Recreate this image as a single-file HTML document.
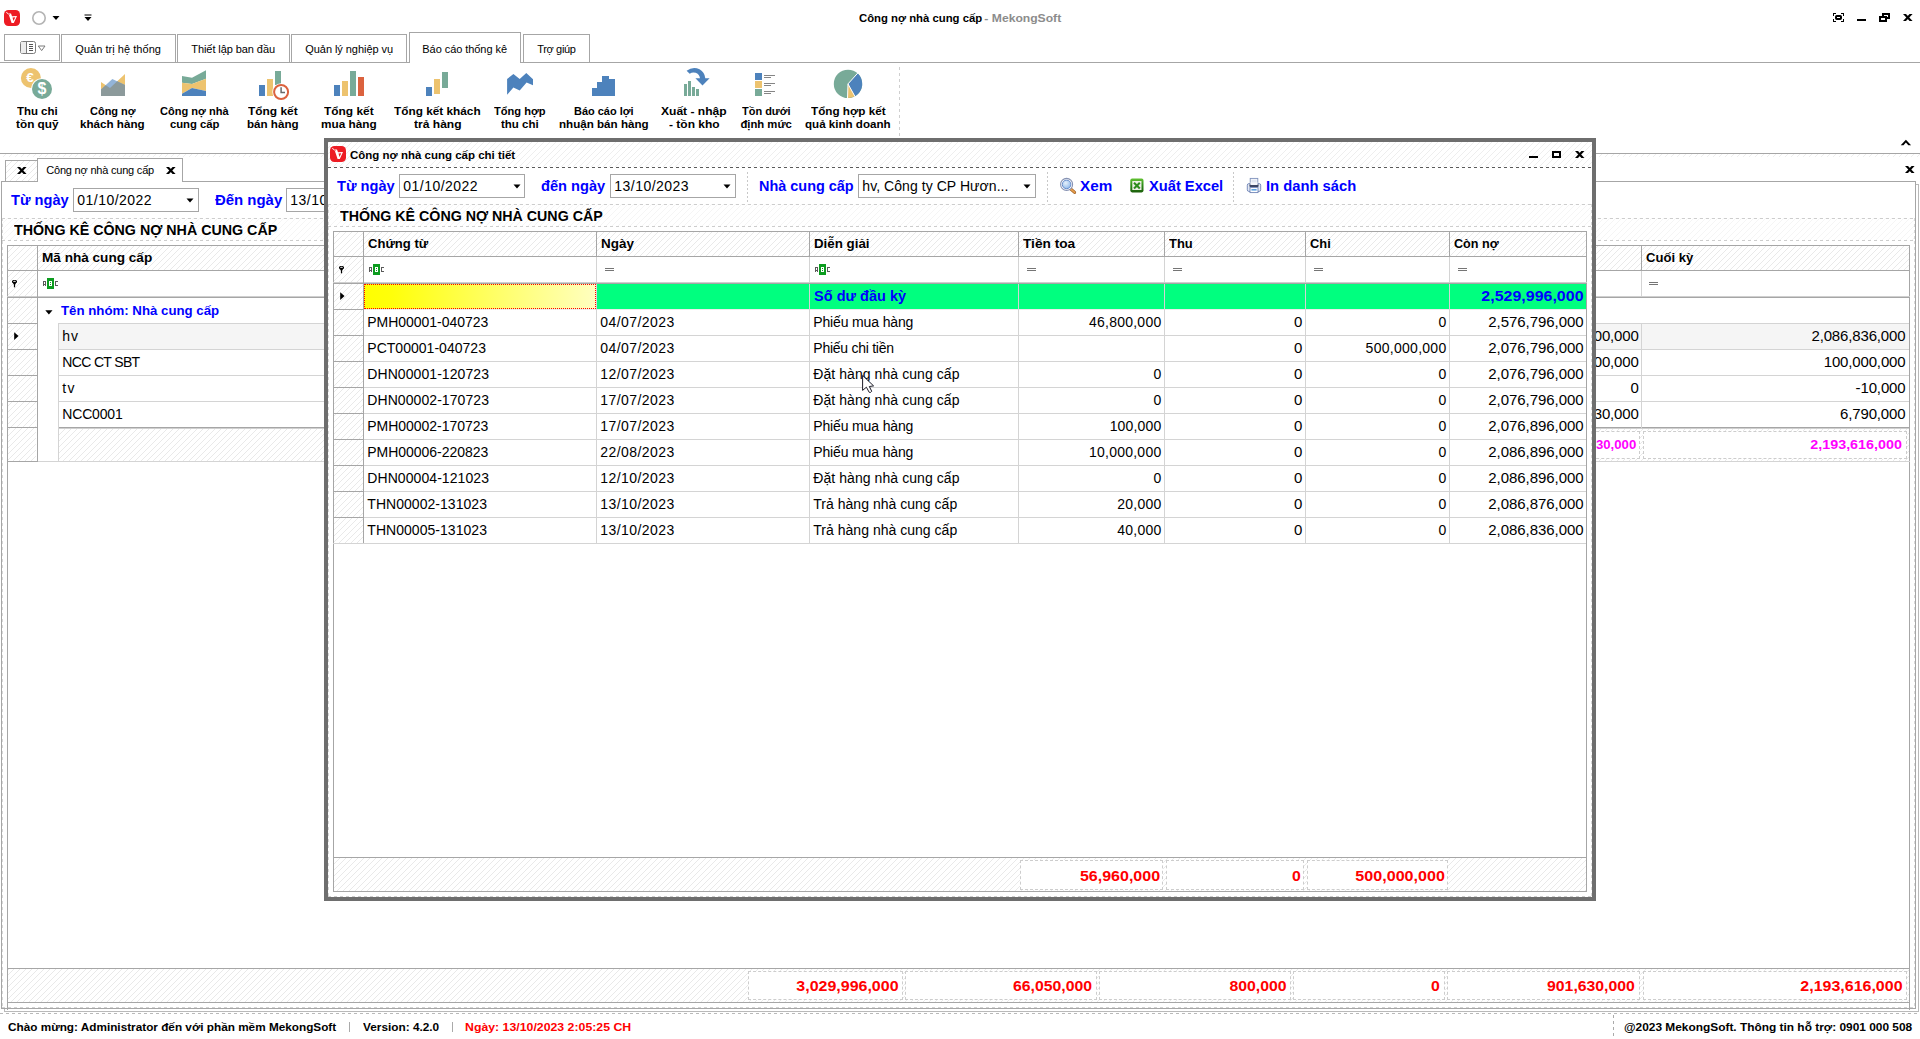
<!DOCTYPE html>
<html><head><meta charset="utf-8"><title>Công nợ nhà cung cấp - MekongSoft</title>
<style>
html,body{margin:0;padding:0;background:#fff;}
body{width:1920px;height:1039px;position:relative;overflow:hidden;font-family:"Liberation Sans",sans-serif;}
#r div,#r svg,#r span{position:absolute;box-sizing:border-box;}
#r span.t{white-space:pre;}
.h{background-image:repeating-linear-gradient(135deg, #eeeeee 0px, #eeeeee 0.7071px, rgba(255,255,255,0) 0.7071px, rgba(255,255,255,0) 4.2426px);background-color:#fff;}
.h1{background-image:repeating-linear-gradient(135deg, #f5f5f5 0px, #f5f5f5 0.7071px, rgba(255,255,255,0) 0.7071px, rgba(255,255,255,0) 4.2426px);background-color:#fff;}
.h2{background-image:repeating-linear-gradient(135deg, #e9e9e9 0px, #e9e9e9 0.7071px, rgba(255,255,255,0) 0.7071px, rgba(255,255,255,0) 4.2426px);background-color:#fff;}
</style></head>
<body><div id="r">
<svg style="left:4px;top:10px" width="16" height="16" viewBox="0 0 16 16"><rect x="0" y="0" width="16" height="16" rx="4.4" fill="#ed1c24"/><path fill-rule="evenodd" d="M4.4 3.5 L7 3.5 L8 6.3 L13 6 L9.8 13 L7.6 13 Z M8.5 7.4 L11.3 7.2 L9.5 11 Z M1.9 2.3 L2.6 2 L5.7 4.6 L5.1 5.3 Z" fill="#fff"/></svg>
<svg style="left:31px;top:10px" width="16" height="16" viewBox="0 0 16 16"><circle cx="8" cy="8" r="6.2" fill="#fff" stroke="#b4b4b4" stroke-width="1.6"/></svg>
<svg style="left:52px;top:15px" width="8" height="6" viewBox="0 0 8 6"><path d="M0.5 1 L7.5 1 L4 5 Z" fill="#000"/></svg>
<svg style="left:84px;top:14px" width="8" height="8" viewBox="0 0 8 8"><path d="M0.5 0.5 H7.5 V1.5 H0.5 Z M0.5 3 L7.5 3 L4 7 Z" fill="#000"/></svg>
<span class="t" id="t0" style="font-size:11.3px;line-height:18px;top:9.0px;color:#000;font-weight:700;transform:scaleX(1.0025);transform-origin:left center;left:859.00px;">Công nợ nhà cung cấp</span>
<span class="t" id="t1" style="font-size:11.3px;line-height:18px;top:9.0px;color:#8c8c8c;font-weight:700;transform:scaleX(1.0738);transform-origin:left center;left:981.00px;"> - MekongSoft</span>
<svg style="left:1833px;top:13px" width="11" height="9" viewBox="0 0 11 9"><g shape-rendering="crispEdges" fill="#000"><rect x="0" y="0" width="3" height="1"/><rect x="0" y="0" width="1" height="3"/><rect x="8" y="0" width="3" height="1"/><rect x="10" y="0" width="1" height="3"/><rect x="0" y="8" width="3" height="1"/><rect x="0" y="6" width="1" height="3"/><rect x="8" y="8" width="3" height="1"/><rect x="10" y="6" width="1" height="3"/></g><rect x="3" y="3" width="5" height="3" rx="0.8" fill="#fff" stroke="#000" stroke-width="2"/></svg>
<div style="left:1857px;top:19px;width:9px;height:2px;background:#000"></div>
<div style="left:1882px;top:13px;width:8px;height:6px;border:2px solid #000;background:#fff"></div>
<div style="left:1879px;top:16px;width:8px;height:6px;border:2px solid #000;background:#fff"></div>
<svg style="left:1902.5px;top:14px" width="10" height="7" viewBox="0 0 10 7"><path d="M0 0 H3 L9.6 7 H6.6 Z M6.6 0 H9.6 L3 7 H0 Z" fill="#000"/></svg>
<div style="left:0px;top:62px;width:1920px;height:1px;background:#a6a6a6"></div>
<div style="left:4px;top:34px;width:56px;height:27px;border:1px solid #a6a6a6;background:#fff"></div>
<svg style="left:20px;top:41px" width="26" height="13" viewBox="0 0 26 13"><rect x="0.5" y="0.5" width="15" height="12" rx="2" fill="#fff" stroke="#7a7a7a" stroke-width="1"/><rect x="1" y="1" width="5" height="11" fill="#ededed"/><rect x="6" y="1" width="1" height="11" fill="#7a7a7a"/><g fill="#555" shape-rendering="crispEdges"><rect x="9" y="3" width="4" height="1"/><rect x="9" y="5" width="4" height="1"/><rect x="9" y="7" width="4" height="1"/><rect x="9" y="9" width="4" height="1"/></g><path d="M18.3 5 L25 5 L21.65 9.6 Z" fill="#fff" stroke="#7a7a7a" stroke-width="1"/></svg>
<div style="left:61px;top:34px;width:115px;height:28px;border:1px solid #a6a6a6;border-bottom:none;background:#fff"></div>
<span class="t" id="t2" style="font-size:11px;line-height:17px;top:40.5px;color:#000;letter-spacing:0.040px;left:75.30px;">Quản trị hệ thống</span>
<div style="left:177px;top:34px;width:113px;height:28px;border:1px solid #a6a6a6;border-bottom:none;background:#fff"></div>
<span class="t" id="t3" style="font-size:11px;line-height:17px;top:40.5px;color:#000;letter-spacing:-0.077px;left:191.30px;">Thiết lập ban đầu</span>
<div style="left:291px;top:34px;width:116px;height:28px;border:1px solid #a6a6a6;border-bottom:none;background:#fff"></div>
<span class="t" id="t4" style="font-size:11px;line-height:17px;top:40.5px;color:#000;letter-spacing:-0.057px;left:305.30px;">Quản lý nghiệp vụ</span>
<div style="left:409px;top:32px;width:112px;height:30px;border:1px solid #a6a6a6;border-bottom:none;background:#fff"></div>
<div style="left:410px;top:62px;width:110px;height:1px;background:#fff"></div>
<span class="t" id="t5" style="font-size:11px;line-height:17px;top:40.5px;color:#000;letter-spacing:-0.058px;left:422.30px;">Báo cáo thống kê</span>
<div style="left:523px;top:34px;width:67px;height:28px;border:1px solid #a6a6a6;border-bottom:none;background:#fff"></div>
<span class="t" id="t6" style="font-size:11px;line-height:17px;top:40.5px;color:#000;letter-spacing:-0.356px;left:537.30px;">Trợ giúp</span>
<span class="t" id="t7" style="font-size:11.3px;line-height:18px;top:102.0px;color:#000;font-weight:700;transform:scaleX(1.0107);transform-origin:left center;left:16.90px;">Thu chi</span>
<span class="t" id="t8" style="font-size:11.3px;line-height:18px;top:115.0px;color:#000;font-weight:700;transform:scaleX(1.0442);transform-origin:left center;left:15.90px;">tồn quỹ</span>
<span class="t" id="t9" style="font-size:11.3px;line-height:18px;top:102.0px;color:#000;font-weight:700;transform:scaleX(0.9715);transform-origin:left center;left:89.90px;">Công nợ</span>
<span class="t" id="t10" style="font-size:11.3px;line-height:18px;top:115.0px;color:#000;font-weight:700;transform:scaleX(1.0290);transform-origin:left center;left:80.40px;">khách hàng</span>
<span class="t" id="t11" style="font-size:11.3px;line-height:18px;top:102.0px;color:#000;font-weight:700;transform:scaleX(0.9778);transform-origin:left center;left:160.40px;">Công nợ nhà</span>
<span class="t" id="t12" style="font-size:11.3px;line-height:18px;top:115.0px;color:#000;font-weight:700;left:169.90px;">cung cấp</span>
<span class="t" id="t13" style="font-size:11.3px;line-height:18px;top:102.0px;color:#000;font-weight:700;transform:scaleX(1.0536);transform-origin:left center;left:248.40px;">Tổng kết</span>
<span class="t" id="t14" style="font-size:11.3px;line-height:18px;top:115.0px;color:#000;font-weight:700;transform:scaleX(1.0275);transform-origin:left center;left:247.40px;">bán hàng</span>
<span class="t" id="t15" style="font-size:11.3px;line-height:18px;top:102.0px;color:#000;font-weight:700;transform:scaleX(1.0536);transform-origin:left center;left:324.40px;">Tổng kết</span>
<span class="t" id="t16" style="font-size:11.3px;line-height:18px;top:115.0px;color:#000;font-weight:700;transform:scaleX(1.0420);transform-origin:left center;left:321.40px;">mua hàng</span>
<span class="t" id="t17" style="font-size:11.3px;line-height:18px;top:102.0px;color:#000;font-weight:700;transform:scaleX(1.0451);transform-origin:left center;left:394.40px;">Tổng kết khách</span>
<span class="t" id="t18" style="font-size:11.3px;line-height:18px;top:115.0px;color:#000;font-weight:700;transform:scaleX(1.0678);transform-origin:left center;left:413.90px;">trả hàng</span>
<span class="t" id="t19" style="font-size:11.3px;line-height:18px;top:102.0px;color:#000;font-weight:700;transform:scaleX(0.9814);transform-origin:left center;left:494.40px;">Tổng hợp</span>
<span class="t" id="t20" style="font-size:11.3px;line-height:18px;top:115.0px;color:#000;font-weight:700;transform:scaleX(1.0154);transform-origin:left center;left:501.40px;">thu chi</span>
<span class="t" id="t21" style="font-size:11.3px;line-height:18px;top:102.0px;color:#000;font-weight:700;transform:scaleX(0.9706);transform-origin:left center;left:574.40px;">Báo cáo lợi</span>
<span class="t" id="t22" style="font-size:11.3px;line-height:18px;top:115.0px;color:#000;font-weight:700;transform:scaleX(1.0271);transform-origin:left center;left:559.40px;">nhuận bán hàng</span>
<span class="t" id="t23" style="font-size:11.3px;line-height:18px;top:102.0px;color:#000;font-weight:700;transform:scaleX(1.0664);transform-origin:left center;left:661.40px;">Xuất - nhập</span>
<span class="t" id="t24" style="font-size:11.3px;line-height:18px;top:115.0px;color:#000;font-weight:700;transform:scaleX(1.0611);transform-origin:left center;left:668.90px;">- tồn kho</span>
<span class="t" id="t25" style="font-size:11.3px;line-height:18px;top:102.0px;color:#000;font-weight:700;transform:scaleX(0.9702);transform-origin:left center;left:741.90px;">Tồn dưới</span>
<span class="t" id="t26" style="font-size:11.3px;line-height:18px;top:115.0px;color:#000;font-weight:700;left:740.40px;">định mức</span>
<span class="t" id="t27" style="font-size:11.3px;line-height:18px;top:102.0px;color:#000;font-weight:700;transform:scaleX(1.0354);transform-origin:left center;left:810.90px;">Tổng hợp kết</span>
<span class="t" id="t28" style="font-size:11.3px;line-height:18px;top:115.0px;color:#000;font-weight:700;transform:scaleX(1.0253);transform-origin:left center;left:805.40px;">quả kinh doanh</span>
<div style="left:899px;top:67px;width:1px;height:69px;background:repeating-linear-gradient(180deg,#cfcfcf 0,#cfcfcf 3px,transparent 3px,transparent 6px)"></div>
<svg style="left:1899px;top:138px" width="14" height="9" viewBox="1899 138 14 9"><path d="M1900.7 145.2 L1905.9 139.8 L1911.1 145.2 L1908.3 145.2 L1905.9 142.6 L1903.5 145.2 Z" fill="#000"/></svg>
<svg style="left:0px;top:64px" width="900" height="40" viewBox="0 64 900 40"><circle cx="30.9" cy="78" r="10" fill="#edc36f"/><text x="30" y="81.9" font-size="13.5" font-weight="700" text-anchor="middle" fill="#fff" font-family="Liberation Sans">€</text><circle cx="42" cy="89" r="10.8" fill="#fff"/><circle cx="42" cy="89" r="10" fill="#78aa98"/><text x="42" y="94.4" font-size="16" font-weight="700" text-anchor="middle" fill="#fff" font-family="Liberation Sans">$</text><path d="M101 82 L110 88 L125 74 V96 H101 Z" fill="#edc36f"/><path d="M101 89.6 L112.3 79 L125 85 V96 H101 Z" fill="#93b4d8"/><path d="M101 89.6 L105.7 85.2 L110 88 L117.2 81.3 L125 85 V96 H101 Z" fill="#8c9a9b"/><path d="M182 75.9 L192 77.8 L206 70.2 V78.7 L192 84 L182 82.8 Z" fill="#78aa98"/><path d="M182 82.8 L192 84 L206 78.7 V91 L192 88 L182 93.7 Z" fill="#edc36f"/><path d="M182 93.7 L192 88 L206 91 V96 H182 Z" fill="#4d82bc"/><rect x="259" y="85" width="6" height="11" fill="#4d82bc"/><rect x="267" y="79" width="6" height="17" fill="#edc36f"/><rect x="275" y="71" width="6" height="14" fill="#78aa98"/><circle cx="281.1" cy="92" r="8.8" fill="#fff"/><circle cx="281.1" cy="92" r="7" fill="#fff" stroke="#db623e" stroke-width="2"/><path d="M281.1 87.2 V92.6 H285" fill="none" stroke="#6a6a6a" stroke-width="1.5"/><rect x="334" y="85" width="6" height="11" fill="#4d82bc"/><rect x="342" y="81" width="6" height="15" fill="#edc36f"/><rect x="350" y="71" width="6" height="25" fill="#78aa98"/><rect x="358" y="77" width="6" height="19" fill="#db623e"/><rect x="426" y="87" width="6" height="9" fill="#4d82bc"/><rect x="434" y="79" width="6" height="15" fill="#edc36f"/><rect x="442" y="72" width="6" height="16" fill="#78aa98"/><path d="M507.1 79 L513.4 74 L519.7 79 L526.3 73 L533 79.3 V85.3 L526.6 82.6 L519.7 90.6 L513.4 87.5 L507.1 94.8 Z" fill="#4d82bc"/><path d="M592 96 V88 H597 V82 H602 V76 H609 V79 H615 V96 Z" fill="#4d82bc"/><rect x="684" y="84" width="3" height="12" fill="#78aa98"/><rect x="688" y="81" width="3" height="15" fill="#78aa98"/><rect x="692" y="87" width="3" height="9" fill="#78aa98"/><rect x="696" y="89" width="3" height="7" fill="#78aa98"/><path d="M686.6 70.8 Q693 66 699.5 69.3 Q704.8 72.5 705.3 78.2 L709.6 78.2 L702.5 85.5 L695.4 78.2 L700 78.2 Q699.3 74.2 695.6 72.8 Q692.3 71.9 689.7 73.7 Z" fill="#4d82bc"/><rect x="755" y="73" width="7" height="7" fill="#4d82bc"/><rect x="755" y="81" width="7" height="7" fill="#edc36f"/><rect x="755" y="89" width="7" height="7" fill="#78aa98"/><path d="M764 75.5 H775 M764 77.5 H771 M764 83.5 H775 M764 85.5 H771 M764 91.5 H775 M764 93.5 H771" stroke="#858585" stroke-width="1"/><circle cx="848" cy="83.9" r="14.2" fill="#78aa98"/><path d="M848 83.9 L857.50 73.35 A14.2 14.2 0 0 1 854.88 96.32 Z" fill="#4d82bc"/><path d="M848 83.9 L854.88 96.32 A14.2 14.2 0 0 1 847.50 98.09 Z" fill="#edc36f"/><path d="M858.04 72.75 L848 83.9 L855.27 97.02 M848 83.9 L847.48 98.89" stroke="#fff" stroke-width="1" fill="none"/></svg>
<div style="left:0px;top:153px;width:1920px;height:1px;background:#a6a6a6"></div>
<div class="h" style="left:0;top:154px;width:1920px;height:3px"></div>
<div style="left:0px;top:158px;width:1920px;height:24px;background:#fff"></div>
<div class="h2" style="left:5px;top:160px;width:33px;height:22px;border:1px solid #a6a6a6"></div>
<svg style="left:16.8px;top:167px" width="10" height="7" viewBox="0 0 10 7"><path d="M0 0 H3 L9.6 7 H6.6 Z M6.6 0 H9.6 L3 7 H0 Z" fill="#000"/></svg>
<div style="left:1px;top:181px;width:1915px;height:828px;border:1px solid #a6a6a6;background:#fff"></div>
<div style="left:1918px;top:184px;width:1px;height:828px;background:#b9b9b9"></div>
<div style="left:1916px;top:184px;width:3px;height:1px;background:#b9b9b9"></div>
<div style="left:4px;top:1011px;width:1915px;height:1px;background:#b9b9b9"></div>
<div style="left:4px;top:1009px;width:1px;height:3px;background:#b9b9b9"></div>
<div style="left:2px;top:1007px;width:1913px;height:1px;background:repeating-linear-gradient(90deg,#d4d4d4 0,#d4d4d4 3px,transparent 3px,transparent 6px)"></div>
<div style="left:2px;top:241px;width:1px;height:766px;background:repeating-linear-gradient(180deg,#d8d8d8 0,#d8d8d8 3px,transparent 3px,transparent 6px)"></div>
<div style="left:1914px;top:241px;width:1px;height:766px;background:repeating-linear-gradient(180deg,#d8d8d8 0,#d8d8d8 3px,transparent 3px,transparent 6px)"></div>
<div style="left:37px;top:158px;width:146px;height:24px;border:1px solid #a6a6a6;border-bottom:none;background:#fff"></div>
<span class="t" id="t29" style="font-size:11px;line-height:17px;top:161.5px;color:#000;letter-spacing:-0.205px;left:46.30px;">Công nợ nhà cung cấp</span>
<svg style="left:165.7px;top:167px" width="10" height="7" viewBox="0 0 10 7"><path d="M0 0 H3 L9.6 7 H6.6 Z M6.6 0 H9.6 L3 7 H0 Z" fill="#000"/></svg>
<svg style="left:1904.7px;top:166px" width="10" height="7" viewBox="0 0 10 7"><path d="M0 0 H3 L9.6 7 H6.6 Z M6.6 0 H9.6 L3 7 H0 Z" fill="#000"/></svg>
<span class="t" id="t30" style="font-size:14px;line-height:22px;top:189.0px;color:#0000ff;font-weight:700;transform:scaleX(1.0440);transform-origin:left center;left:11.00px;">Từ ngày</span>
<div style="left:73px;top:188px;width:126px;height:24px;border:1px solid #a6a6a6;background:#fff"></div>
<span class="t" id="t31" style="font-size:14px;line-height:22px;top:189.0px;color:#000;letter-spacing:0.462px;left:77.30px;">01/10/2022</span>
<svg style="left:186.2px;top:197.5px" width="8" height="5" viewBox="0 0 8 5"><path d="M0.5 0.5 L7.5 0.5 L4 4.5 Z" fill="#000"/></svg>
<span class="t" id="t32" style="font-size:14px;line-height:22px;top:189.0px;color:#0000ff;font-weight:700;transform:scaleX(1.0664);transform-origin:left center;left:215.00px;">Đến ngày</span>
<div style="left:286px;top:188px;width:126px;height:24px;border:1px solid #a6a6a6;background:#fff"></div>
<span class="t" id="t33" style="font-size:14px;line-height:22px;top:189.0px;color:#000;letter-spacing:0.462px;left:290.30px;">13/10/2023</span>
<div class="h1" style="left:2px;top:218px;width:1913px;height:23px"></div>
<div style="left:2px;top:218px;width:1913px;height:1px;background:repeating-linear-gradient(90deg,#cdcdcd 0,#cdcdcd 3px,transparent 3px,transparent 6px)"></div>
<div style="left:2px;top:240px;width:1913px;height:1px;background:repeating-linear-gradient(90deg,#cdcdcd 0,#cdcdcd 3px,transparent 3px,transparent 6px)"></div>
<div style="left:2px;top:218px;width:1px;height:23px;background:repeating-linear-gradient(180deg,#d8d8d8 0,#d8d8d8 3px,transparent 3px,transparent 6px)"></div>
<div style="left:1914px;top:218px;width:1px;height:23px;background:repeating-linear-gradient(180deg,#d8d8d8 0,#d8d8d8 3px,transparent 3px,transparent 6px)"></div>
<span class="t" id="t34" style="font-size:14px;line-height:22px;top:219.0px;color:#000;font-weight:700;transform:scaleX(1.0181);transform-origin:left center;left:14.00px;">THỐNG KÊ CÔNG NỢ NHÀ CUNG CẤP</span>
<div class="h2" style="left:7px;top:245px;width:1903px;height:26px;border:1px solid #a6a6a6"></div>
<div style="left:37px;top:245px;width:1px;height:26px;background:#a6a6a6"></div>
<div style="left:1641px;top:245px;width:1px;height:26px;background:#a6a6a6"></div>
<span class="t" id="t35" style="font-size:12.5px;line-height:20px;top:248.0px;color:#000;font-weight:700;transform:scaleX(1.0867);transform-origin:left center;left:42.00px;">Mã nhà cung cấp</span>
<span class="t" id="t36" style="font-size:12.5px;line-height:20px;top:248.0px;color:#000;font-weight:700;transform:scaleX(1.0453);transform-origin:left center;left:1646.00px;">Cuối kỳ</span>
<div style="left:7px;top:270px;width:1903px;height:28px;border:1px solid #a6a6a6;border-bottom:none;background:#fff"></div>
<div style="left:7px;top:296px;width:1903px;height:1px;background:#cfcfcf"></div>
<div style="left:7px;top:297px;width:1903px;height:1px;background:#a6a6a6"></div>
<div class="h2" style="left:8px;top:271px;width:28px;height:25px"></div>
<div style="left:37px;top:270px;width:1px;height:27px;background:#a6a6a6"></div>
<div style="left:1641px;top:271px;width:1px;height:25px;background:#d4d4d4"></div>
<svg style="left:12px;top:280px" width="5" height="8" viewBox="0 0 5 8"><ellipse cx="2.5" cy="1.7" rx="2.6" ry="1.8" fill="#000"/><ellipse cx="2.5" cy="1.25" rx="1.4" ry="0.55" fill="#fff"/><path d="M0.5 2.6 L4.5 2.6 L3.1 4.6 L1.9 4.6 Z" fill="#000"/><rect x="1.9" y="4" width="1.2" height="3.3" fill="#000"/></svg>
<svg style="left:43px;top:278px" width="15" height="11" viewBox="0 0 15 11"><g shape-rendering="crispEdges"><rect x="4" y="0" width="7" height="11" fill="#0c9c1f"/><g fill="#5a5a5a"><rect x="0" y="3" width="3" height="1"/><rect x="0" y="6" width="3" height="1"/><rect x="0" y="3" width="1" height="5"/><rect x="2" y="3" width="1" height="5"/><rect x="12" y="3" width="3" height="1"/><rect x="12" y="7" width="3" height="1"/><rect x="12" y="3" width="1" height="5"/></g><rect x="6" y="3" width="3" height="5" fill="#fff"/><rect x="7" y="4" width="1" height="1" fill="#0c9c1f"/><rect x="7" y="6" width="1" height="1" fill="#0c9c1f"/></g></svg>
<div style="left:1649px;top:282px;width:9px;height:1px;background:#757575"></div>
<div style="left:1649px;top:284px;width:9px;height:1px;background:#757575"></div>
<div style="left:7px;top:298px;width:1px;height:164px;background:#a6a6a6"></div>
<div style="left:1909px;top:298px;width:1px;height:712px;background:#a6a6a6"></div>
<div style="left:7px;top:462px;width:1px;height:548px;background:#a6a6a6"></div>
<div class="h2" style="left:8px;top:298px;width:28px;height:164px"></div>
<div style="left:37px;top:298px;width:1px;height:164px;background:#a6a6a6"></div>
<div style="left:7px;top:323px;width:30px;height:1px;background:#a6a6a6"></div>
<div style="left:7px;top:349px;width:30px;height:1px;background:#a6a6a6"></div>
<div style="left:7px;top:375px;width:30px;height:1px;background:#a6a6a6"></div>
<div style="left:7px;top:401px;width:30px;height:1px;background:#a6a6a6"></div>
<div style="left:7px;top:427px;width:30px;height:1px;background:#a6a6a6"></div>
<div style="left:7px;top:461px;width:1903px;height:1px;background:#d4d4d4"></div>
<div style="left:7px;top:461px;width:31px;height:1px;background:#a6a6a6"></div>
<div style="left:58px;top:323px;width:1851px;height:1px;background:#d4d4d4"></div>
<svg style="left:44.6px;top:309.7px" width="8" height="5" viewBox="0 0 8 5"><path d="M0.3 0.3 L7.5 0.3 L3.9 4.4 Z" fill="#000"/></svg>
<span class="t" id="t37" style="font-size:13px;line-height:20px;top:301.0px;color:#0000ff;font-weight:700;transform:scaleX(1.0187);transform-origin:left center;left:61.00px;">Tên nhóm: Nhà cung cấp</span>
<div style="left:58px;top:323px;width:1px;height:139px;background:#d4d4d4"></div>
<div style="left:59px;top:324px;width:1850px;height:25px;background:#f5f5f5"></div>
<span class="t" id="t38" style="font-size:14px;line-height:22px;top:324.5px;color:#000;letter-spacing:0.952px;left:62.30px;">hv</span>
<span class="t" id="t39" style="font-size:15px;line-height:23px;top:323.5px;color:#000;letter-spacing:-0.153px;right:281.353px;">00,000</span>
<span class="t" id="t40" style="font-size:15px;line-height:23px;top:323.5px;color:#000;letter-spacing:-0.148px;right:14.548px;">2,086,836,000</span>
<span class="t" id="t41" style="font-size:14px;line-height:22px;top:350.5px;color:#000;letter-spacing:-0.655px;left:62.30px;">NCC CT SBT</span>
<span class="t" id="t42" style="font-size:15px;line-height:23px;top:349.5px;color:#000;letter-spacing:-0.153px;right:281.353px;">00,000</span>
<span class="t" id="t43" style="font-size:15px;line-height:23px;top:349.5px;color:#000;letter-spacing:-0.152px;right:14.552px;">100,000,000</span>
<span class="t" id="t44" style="font-size:14px;line-height:22px;top:376.5px;color:#000;letter-spacing:1.405px;left:62.30px;">tv</span>
<span class="t" id="t45" style="font-size:15px;line-height:23px;top:375.5px;color:#000;letter-spacing:-0.167px;right:281.367px;">0</span>
<span class="t" id="t46" style="font-size:15px;line-height:23px;top:375.5px;color:#000;letter-spacing:-0.145px;right:14.545px;">-10,000</span>
<span class="t" id="t47" style="font-size:14px;line-height:22px;top:402.5px;color:#000;letter-spacing:-0.183px;left:62.30px;">NCC0001</span>
<span class="t" id="t48" style="font-size:15px;line-height:23px;top:401.5px;color:#000;letter-spacing:-0.153px;right:281.353px;">30,000</span>
<span class="t" id="t49" style="font-size:15px;line-height:23px;top:401.5px;color:#000;letter-spacing:-0.148px;right:14.548px;">6,790,000</span>
<div style="left:59px;top:349px;width:1850px;height:1px;background:#d4d4d4"></div>
<div style="left:59px;top:375px;width:1850px;height:1px;background:#d4d4d4"></div>
<div style="left:59px;top:401px;width:1850px;height:1px;background:#d4d4d4"></div>
<div style="left:59px;top:427px;width:1850px;height:1px;background:#a6a6a6"></div>
<div style="left:59px;top:428px;width:1850px;height:1px;background:#d0d0d0"></div>
<div style="left:1641px;top:323px;width:1px;height:105px;background:#d4d4d4"></div>
<svg style="left:13.7px;top:332.4px" width="5" height="9" viewBox="0 0 5 9"><path d="M0.2 0.2 L4.5 4.1 L0.2 8 Z" fill="#000"/></svg>
<div class="h2" style="left:59px;top:429px;width:1850px;height:32px"></div>
<div style="left:1643px;top:431px;width:264px;height:28px;background:#fff;border:1px dashed #cdcdcd"></div>
<div style="left:1540px;top:431px;width:100px;height:28px;background:#fff;border:1px dashed #cdcdcd"></div>
<span class="t" id="t50" style="font-size:12.5px;line-height:20px;top:435.0px;color:#ff00ff;font-weight:700;transform:scaleX(1.0550);transform-origin:right center;right:283.700px;">30,000</span>
<span class="t" id="t51" style="font-size:12.5px;line-height:20px;top:435.0px;color:#ff00ff;font-weight:700;transform:scaleX(1.1469);transform-origin:right center;right:17.800px;">2,193,616,000</span>
<div class="h2" style="left:7px;top:968px;width:1903px;height:35px;border:1px solid #a6a6a6"></div>
<div style="left:748px;top:971px;width:155px;height:29px;background:#fff;border:1px dashed #cdcdcd"></div>
<span class="t" id="t52" style="font-size:14px;line-height:22px;top:974.5px;color:#ff0000;font-weight:700;transform:scaleX(1.1415);transform-origin:right center;right:1021.900px;">3,029,996,000</span>
<div style="left:905px;top:971px;width:192px;height:29px;background:#fff;border:1px dashed #cdcdcd"></div>
<span class="t" id="t53" style="font-size:14px;line-height:22px;top:974.5px;color:#ff0000;font-weight:700;transform:scaleX(1.1280);transform-origin:right center;right:827.900px;">66,050,000</span>
<div style="left:1099px;top:971px;width:192px;height:29px;background:#fff;border:1px dashed #cdcdcd"></div>
<span class="t" id="t54" style="font-size:14px;line-height:22px;top:974.5px;color:#ff0000;font-weight:700;transform:scaleX(1.1280);transform-origin:right center;right:633.900px;">800,000</span>
<div style="left:1293px;top:971px;width:152px;height:29px;background:#fff;border:1px dashed #cdcdcd"></div>
<span class="t" id="t55" style="font-size:14px;line-height:22px;top:974.5px;color:#ff0000;font-weight:700;transform:scaleX(1.1280);transform-origin:right center;right:479.900px;">0</span>
<div style="left:1447px;top:971px;width:193px;height:29px;background:#fff;border:1px dashed #cdcdcd"></div>
<span class="t" id="t56" style="font-size:14px;line-height:22px;top:974.5px;color:#ff0000;font-weight:700;transform:scaleX(1.1280);transform-origin:right center;right:284.900px;">901,630,000</span>
<div style="left:1643px;top:971px;width:264px;height:29px;background:#fff;border:1px dashed #cdcdcd"></div>
<span class="t" id="t57" style="font-size:14px;line-height:22px;top:974.5px;color:#ff0000;font-weight:700;transform:scaleX(1.1415);transform-origin:right center;right:17.900px;">2,193,616,000</span>
<div style="left:0px;top:1013px;width:1920px;height:26px;background:#fff"></div>
<div style="left:0px;top:1013px;width:1920px;height:1px;background:repeating-linear-gradient(90deg,#b9b9b9 0,#b9b9b9 3px,transparent 3px,transparent 6px)"></div>
<span class="t" id="t58" style="font-size:11.3px;line-height:18px;top:1018.0px;color:#000;font-weight:700;transform:scaleX(1.0413);transform-origin:left center;left:8.00px;">Chào mừng: Administrator đến với phần mềm MekongSoft</span>
<div style="left:349px;top:1022px;width:1px;height:10px;background:#aaa"></div>
<span class="t" id="t59" style="font-size:11.3px;line-height:18px;top:1018.0px;color:#000;font-weight:700;transform:scaleX(1.0461);transform-origin:left center;left:363.00px;">Version: 4.2.0</span>
<div style="left:452px;top:1022px;width:1px;height:10px;background:#aaa"></div>
<span class="t" id="t60" style="font-size:11.3px;line-height:18px;top:1018.0px;color:#ff0000;font-weight:700;transform:scaleX(1.0891);transform-origin:left center;left:465.00px;">Ngày: 13/10/2023 2:05:25 CH</span>
<div style="left:1613px;top:1015px;width:1px;height:24px;background:repeating-linear-gradient(180deg,#aaa 0,#aaa 3px,transparent 3px,transparent 6px)"></div>
<span class="t" id="t61" style="font-size:11.3px;line-height:18px;top:1018.0px;color:#000;font-weight:700;transform:scaleX(1.0521);transform-origin:left center;left:1624.00px;">@2023 MekongSoft. Thông tin hỗ trợ: 0901 000 508</span>
<div style="left:324px;top:138px;width:1272px;height:763px;border:4px solid #6e6e6e;background:#fff"></div>
<div class="h" style="left:328px;top:142px;width:1264px;height:25px"></div>
<svg style="left:330px;top:146px" width="16" height="16" viewBox="0 0 16 16"><rect x="0" y="0" width="16" height="16" rx="4.4" fill="#ed1c24"/><path fill-rule="evenodd" d="M4.4 3.5 L7 3.5 L8 6.3 L13 6 L9.8 13 L7.6 13 Z M8.5 7.4 L11.3 7.2 L9.5 11 Z M1.9 2.3 L2.6 2 L5.7 4.6 L5.1 5.3 Z" fill="#fff"/></svg>
<span class="t" id="t62" style="font-size:11.3px;line-height:18px;top:146.0px;color:#000;font-weight:700;transform:scaleX(1.0170);transform-origin:left center;left:350.00px;">Công nợ nhà cung cấp chi tiết</span>
<div style="left:328px;top:167px;width:1264px;height:1px;background:repeating-linear-gradient(90deg,#5a5a5a 0,#5a5a5a 3px,transparent 3px,transparent 6px)"></div>
<div style="left:1529px;top:156px;width:9px;height:2px;background:#000"></div>
<div style="left:1552px;top:151px;width:9px;height:7px;border:2px solid #000"></div>
<svg style="left:1574.8px;top:151px" width="10" height="7" viewBox="0 0 10 7"><path d="M0 0 H3 L9.4 7 H6.4 Z M6.4 0 H9.4 L3 7 H0 Z" fill="#000"/></svg>
<span class="t" id="t63" style="font-size:14px;line-height:22px;top:175.0px;color:#0000ff;font-weight:700;transform:scaleX(1.0440);transform-origin:left center;left:337.00px;">Từ ngày</span>
<div style="left:399px;top:174px;width:126px;height:24px;border:1px solid #a6a6a6;background:#fff"></div>
<span class="t" id="t64" style="font-size:14px;line-height:22px;top:175.0px;color:#000;letter-spacing:0.462px;left:403.30px;">01/10/2022</span>
<svg style="left:512.7px;top:183.5px" width="8" height="5" viewBox="0 0 8 5"><path d="M0.5 0.5 L7.5 0.5 L4 4.5 Z" fill="#000"/></svg>
<span class="t" id="t65" style="font-size:14px;line-height:22px;top:175.0px;color:#0000ff;font-weight:700;transform:scaleX(1.0444);transform-origin:left center;left:541.00px;">đến ngày</span>
<div style="left:610px;top:174px;width:126px;height:24px;border:1px solid #a6a6a6;background:#fff"></div>
<span class="t" id="t66" style="font-size:14px;line-height:22px;top:175.0px;color:#000;letter-spacing:0.462px;left:614.30px;">13/10/2023</span>
<svg style="left:723.4px;top:183.5px" width="8" height="5" viewBox="0 0 8 5"><path d="M0.5 0.5 L7.5 0.5 L4 4.5 Z" fill="#000"/></svg>
<div style="left:747px;top:172px;width:1px;height:30px;background:repeating-linear-gradient(180deg,#c8c8c8 0,#c8c8c8 2px,transparent 2px,transparent 4px)"></div>
<span class="t" id="t67" style="font-size:14px;line-height:22px;top:175.0px;color:#0000ff;font-weight:700;transform:scaleX(1.0316);transform-origin:left center;left:759.00px;">Nhà cung cấp</span>
<div style="left:858px;top:174px;width:178px;height:24px;border:1px solid #a6a6a6;background:#fff"></div>
<span class="t" id="t68" style="font-size:14px;line-height:22px;top:175.0px;color:#000;letter-spacing:0.060px;left:862.30px;">hv, Công ty CP Hươn...</span>
<svg style="left:1022.6px;top:183.5px" width="8" height="5" viewBox="0 0 8 5"><path d="M0.5 0.5 L7.5 0.5 L4 4.5 Z" fill="#000"/></svg>
<div style="left:1047px;top:172px;width:1px;height:30px;background:repeating-linear-gradient(180deg,#c8c8c8 0,#c8c8c8 2px,transparent 2px,transparent 4px)"></div>
<svg style="left:1059px;top:177px" width="18" height="18" viewBox="0 0 18 18"><defs><radialGradient id="lg" cx="0.4" cy="0.35" r="0.7"><stop offset="0" stop-color="#e6f1fb"/><stop offset="1" stop-color="#8db7ea"/></radialGradient></defs><path d="M11.6 11.8 L15.6 15.4" stroke="#9a5a1e" stroke-width="3" stroke-linecap="round"/><path d="M11.6 11.8 L15.6 15.4" stroke="#e8a04e" stroke-width="1.7" stroke-linecap="round"/><circle cx="7.6" cy="7.4" r="6" fill="#fff" stroke="#8793b3" stroke-width="1.1"/><circle cx="7.6" cy="7.4" r="4.3" fill="url(#lg)" stroke="#5f86c6" stroke-width="0.9"/></svg>
<span class="t" id="t69" style="font-size:14px;line-height:22px;top:175.0px;color:#0000ff;font-weight:700;transform:scaleX(1.0886);transform-origin:left center;left:1080.00px;">Xem</span>
<svg style="left:1130px;top:178px" width="14" height="15" viewBox="0 0 14 15"><defs><linearGradient id="xg" x1="0" y1="0" x2="0" y2="1"><stop offset="0" stop-color="#62c132"/><stop offset="0.45" stop-color="#2f8f1a"/><stop offset="1" stop-color="#1c5e0c"/></linearGradient></defs><rect x="0.3" y="0.6" width="13.2" height="13.8" rx="1.8" fill="url(#xg)"/><rect x="2.3" y="3" width="9.2" height="9" fill="#eeeee6"/><path d="M4 4.8 L9.8 10.4 M9.8 4.8 L4 10.4" stroke="#2c8c1c" stroke-width="2.1"/></svg>
<span class="t" id="t70" style="font-size:14px;line-height:22px;top:175.0px;color:#0000ff;font-weight:700;transform:scaleX(1.0476);transform-origin:left center;left:1149.00px;">Xuất Excel</span>
<div style="left:1233px;top:172px;width:1px;height:30px;background:repeating-linear-gradient(180deg,#c8c8c8 0,#c8c8c8 2px,transparent 2px,transparent 4px)"></div>
<svg style="left:1246px;top:177px" width="16" height="17" viewBox="0 0 16 17"><rect x="4.2" y="1.4" width="7.6" height="7" fill="#f4f6fb" stroke="#7f92bb" stroke-width="0.9"/><rect x="5.6" y="2.8" width="4.8" height="4" fill="#dfe5f1"/><rect x="1.3" y="6.6" width="13.4" height="7.8" rx="1.6" fill="#e3e9f4" stroke="#6e83b6" stroke-width="0.9"/><rect x="3.4" y="7" width="9.2" height="3" rx="1" fill="#3b4664"/><rect x="4.4" y="5.4" width="7.2" height="2.6" fill="#f4f6fb"/><rect x="4" y="10.6" width="8" height="5" fill="#fff" stroke="#6e83b6" stroke-width="0.9"/><rect x="5.4" y="12" width="5.2" height="1.6" fill="#5aa2e2"/></svg>
<span class="t" id="t71" style="font-size:14px;line-height:22px;top:175.0px;color:#0000ff;font-weight:700;transform:scaleX(1.0540);transform-origin:left center;left:1265.70px;">In danh sách</span>
<div class="h1" style="left:328px;top:204px;width:1264px;height:23px"></div>
<div style="left:328px;top:204px;width:1264px;height:1px;background:repeating-linear-gradient(90deg,#cdcdcd 0,#cdcdcd 3px,transparent 3px,transparent 6px)"></div>
<div style="left:328px;top:226px;width:1264px;height:1px;background:repeating-linear-gradient(90deg,#cdcdcd 0,#cdcdcd 3px,transparent 3px,transparent 6px)"></div>
<div style="left:328px;top:204px;width:1px;height:23px;background:repeating-linear-gradient(180deg,#d8d8d8 0,#d8d8d8 3px,transparent 3px,transparent 6px)"></div>
<div style="left:1591px;top:204px;width:1px;height:23px;background:repeating-linear-gradient(180deg,#d8d8d8 0,#d8d8d8 3px,transparent 3px,transparent 6px)"></div>
<span class="t" id="t72" style="font-size:14px;line-height:22px;top:205.0px;color:#000;font-weight:700;transform:scaleX(1.0162);transform-origin:left center;left:340.30px;">THỐNG KÊ CÔNG NỢ NHÀ CUNG CẤP</span>
<div class="h2" style="left:333px;top:231px;width:1254px;height:26px;border:1px solid #a6a6a6"></div>
<div style="left:363px;top:231px;width:1px;height:26px;background:#a6a6a6"></div>
<div style="left:596px;top:231px;width:1px;height:26px;background:#a6a6a6"></div>
<div style="left:809px;top:231px;width:1px;height:26px;background:#a6a6a6"></div>
<div style="left:1018px;top:231px;width:1px;height:26px;background:#a6a6a6"></div>
<div style="left:1164px;top:231px;width:1px;height:26px;background:#a6a6a6"></div>
<div style="left:1305px;top:231px;width:1px;height:26px;background:#a6a6a6"></div>
<div style="left:1449px;top:231px;width:1px;height:26px;background:#a6a6a6"></div>
<span class="t" id="t73" style="font-size:12.5px;line-height:20px;top:233.5px;color:#000;font-weight:700;transform:scaleX(1.0436);transform-origin:left center;left:368.00px;">Chứng từ</span>
<span class="t" id="t74" style="font-size:12.5px;line-height:20px;top:233.5px;color:#000;font-weight:700;transform:scaleX(1.0759);transform-origin:left center;left:601.00px;">Ngày</span>
<span class="t" id="t75" style="font-size:12.5px;line-height:20px;top:233.5px;color:#000;font-weight:700;transform:scaleX(1.0654);transform-origin:left center;left:814.00px;">Diễn giải</span>
<span class="t" id="t76" style="font-size:12.5px;line-height:20px;top:233.5px;color:#000;font-weight:700;transform:scaleX(1.0943);transform-origin:left center;left:1023.00px;">Tiền toa</span>
<span class="t" id="t77" style="font-size:12.5px;line-height:20px;top:233.5px;color:#000;font-weight:700;transform:scaleX(1.0339);transform-origin:left center;left:1169.00px;">Thu</span>
<span class="t" id="t78" style="font-size:12.5px;line-height:20px;top:233.5px;color:#000;font-weight:700;transform:scaleX(1.0278);transform-origin:left center;left:1310.00px;">Chi</span>
<span class="t" id="t79" style="font-size:12.5px;line-height:20px;top:233.5px;color:#000;font-weight:700;transform:scaleX(1.0091);transform-origin:left center;left:1454.00px;">Còn nợ</span>
<div style="left:333px;top:256px;width:1254px;height:28px;border:1px solid #a6a6a6;border-bottom:none;background:#fff"></div>
<div style="left:333px;top:282px;width:1254px;height:1px;background:#cfcfcf"></div>
<div style="left:333px;top:283px;width:1254px;height:1px;background:#a6a6a6"></div>
<div class="h2" style="left:334px;top:257px;width:29px;height:25px"></div>
<div style="left:363px;top:256px;width:1px;height:27px;background:#a6a6a6"></div>
<div style="left:596px;top:257px;width:1px;height:25px;background:#d4d4d4"></div>
<div style="left:809px;top:257px;width:1px;height:25px;background:#d4d4d4"></div>
<div style="left:1018px;top:257px;width:1px;height:25px;background:#d4d4d4"></div>
<div style="left:1164px;top:257px;width:1px;height:25px;background:#d4d4d4"></div>
<div style="left:1305px;top:257px;width:1px;height:25px;background:#d4d4d4"></div>
<div style="left:1449px;top:257px;width:1px;height:25px;background:#d4d4d4"></div>
<svg style="left:339px;top:266px" width="5" height="8" viewBox="0 0 5 8"><ellipse cx="2.5" cy="1.7" rx="2.6" ry="1.8" fill="#000"/><ellipse cx="2.5" cy="1.25" rx="1.4" ry="0.55" fill="#fff"/><path d="M0.5 2.6 L4.5 2.6 L3.1 4.6 L1.9 4.6 Z" fill="#000"/><rect x="1.9" y="4" width="1.2" height="3.3" fill="#000"/></svg>
<svg style="left:369px;top:264px" width="15" height="11" viewBox="0 0 15 11"><g shape-rendering="crispEdges"><rect x="4" y="0" width="7" height="11" fill="#0c9c1f"/><g fill="#5a5a5a"><rect x="0" y="3" width="3" height="1"/><rect x="0" y="6" width="3" height="1"/><rect x="0" y="3" width="1" height="5"/><rect x="2" y="3" width="1" height="5"/><rect x="12" y="3" width="3" height="1"/><rect x="12" y="7" width="3" height="1"/><rect x="12" y="3" width="1" height="5"/></g><rect x="6" y="3" width="3" height="5" fill="#fff"/><rect x="7" y="4" width="1" height="1" fill="#0c9c1f"/><rect x="7" y="6" width="1" height="1" fill="#0c9c1f"/></g></svg>
<svg style="left:815px;top:264px" width="15" height="11" viewBox="0 0 15 11"><g shape-rendering="crispEdges"><rect x="4" y="0" width="7" height="11" fill="#0c9c1f"/><g fill="#5a5a5a"><rect x="0" y="3" width="3" height="1"/><rect x="0" y="6" width="3" height="1"/><rect x="0" y="3" width="1" height="5"/><rect x="2" y="3" width="1" height="5"/><rect x="12" y="3" width="3" height="1"/><rect x="12" y="7" width="3" height="1"/><rect x="12" y="3" width="1" height="5"/></g><rect x="6" y="3" width="3" height="5" fill="#fff"/><rect x="7" y="4" width="1" height="1" fill="#0c9c1f"/><rect x="7" y="6" width="1" height="1" fill="#0c9c1f"/></g></svg>
<div style="left:605px;top:268px;width:9px;height:1px;background:#757575"></div>
<div style="left:605px;top:270px;width:9px;height:1px;background:#757575"></div>
<div style="left:1027px;top:268px;width:9px;height:1px;background:#757575"></div>
<div style="left:1027px;top:270px;width:9px;height:1px;background:#757575"></div>
<div style="left:1173px;top:268px;width:9px;height:1px;background:#757575"></div>
<div style="left:1173px;top:270px;width:9px;height:1px;background:#757575"></div>
<div style="left:1314px;top:268px;width:9px;height:1px;background:#757575"></div>
<div style="left:1314px;top:270px;width:9px;height:1px;background:#757575"></div>
<div style="left:1458px;top:268px;width:9px;height:1px;background:#757575"></div>
<div style="left:1458px;top:270px;width:9px;height:1px;background:#757575"></div>
<div style="left:333px;top:284px;width:1px;height:608px;background:#a6a6a6"></div>
<div style="left:1586px;top:284px;width:1px;height:608px;background:#a6a6a6"></div>
<div style="left:333px;top:891px;width:1254px;height:1px;background:#a6a6a6"></div>
<div class="h2" style="left:334px;top:284px;width:29px;height:259px"></div>
<div style="left:363px;top:284px;width:1px;height:260px;background:#a6a6a6"></div>
<div style="left:364px;top:284px;width:1222px;height:25px;background:#00ff7f"></div>
<div style="left:364px;top:284px;width:232px;height:25px;background:linear-gradient(90deg,#ffff00 0%,#ffff0a 12%,#ffffc0 100%)"></div>
<div style="left:364px;top:284px;width:232px;height:25px;border:1px dotted #ff0000"></div>
<svg style="left:339.8px;top:292.4px" width="5" height="9" viewBox="0 0 5 9"><path d="M0.2 0.2 L4.5 4.1 L0.2 8 Z" fill="#000"/></svg>
<span class="t" id="t80" style="font-size:14px;line-height:22px;top:284.5px;color:#0000ff;font-weight:700;transform:scaleX(1.0392);transform-origin:left center;left:814.00px;">Số dư đầu kỳ</span>
<span class="t" id="t81" style="font-size:14px;line-height:22px;top:284.5px;color:#0000ff;font-weight:700;transform:scaleX(1.1415);transform-origin:right center;right:336.200px;">2,529,996,000</span>
<span class="t" id="t82" style="font-size:14px;line-height:22px;top:310.5px;color:#000;letter-spacing:-0.035px;left:367.30px;">PMH00001-040723</span>
<span class="t" id="t83" style="font-size:14px;line-height:22px;top:310.5px;color:#000;letter-spacing:0.442px;left:600.30px;">04/07/2023</span>
<span class="t" id="t84" style="font-size:14px;line-height:22px;top:310.5px;color:#000;letter-spacing:-0.148px;left:813.30px;">Phiếu mua hàng</span>
<span class="t" id="t85" style="font-size:14px;line-height:22px;top:310.5px;color:#000;letter-spacing:0.242px;right:758.558px;">46,800,000</span>
<span class="t" id="t86" style="font-size:15px;line-height:23px;top:309.5px;color:#000;right:617.600px;">0</span>
<span class="t" id="t87" style="font-size:14px;line-height:22px;top:310.5px;color:#000;right:473.800px;">0</span>
<span class="t" id="t88" style="font-size:15px;line-height:23px;top:309.5px;color:#000;letter-spacing:-0.034px;right:336.334px;">2,576,796,000</span>
<span class="t" id="t89" style="font-size:14px;line-height:22px;top:336.5px;color:#000;letter-spacing:0.026px;left:367.30px;">PCT00001-040723</span>
<span class="t" id="t90" style="font-size:14px;line-height:22px;top:336.5px;color:#000;letter-spacing:0.442px;left:600.30px;">04/07/2023</span>
<span class="t" id="t91" style="font-size:14px;line-height:22px;top:336.5px;color:#000;letter-spacing:-0.254px;left:813.30px;">Phiếu chi tiền</span>
<span class="t" id="t92" style="font-size:15px;line-height:23px;top:335.5px;color:#000;right:617.600px;">0</span>
<span class="t" id="t93" style="font-size:14px;line-height:22px;top:336.5px;color:#000;letter-spacing:0.276px;right:473.524px;">500,000,000</span>
<span class="t" id="t94" style="font-size:15px;line-height:23px;top:335.5px;color:#000;letter-spacing:-0.034px;right:336.334px;">2,076,796,000</span>
<span class="t" id="t95" style="font-size:14px;line-height:22px;top:362.5px;color:#000;letter-spacing:0.071px;left:367.30px;">DHN00001-120723</span>
<span class="t" id="t96" style="font-size:14px;line-height:22px;top:362.5px;color:#000;letter-spacing:0.442px;left:600.30px;">12/07/2023</span>
<span class="t" id="t97" style="font-size:14px;line-height:22px;top:362.5px;color:#000;letter-spacing:0.068px;left:813.30px;">Đặt hàng nhà cung cấp</span>
<span class="t" id="t98" style="font-size:14px;line-height:22px;top:362.5px;color:#000;right:758.800px;">0</span>
<span class="t" id="t99" style="font-size:15px;line-height:23px;top:361.5px;color:#000;right:617.600px;">0</span>
<span class="t" id="t100" style="font-size:14px;line-height:22px;top:362.5px;color:#000;right:473.800px;">0</span>
<span class="t" id="t101" style="font-size:15px;line-height:23px;top:361.5px;color:#000;letter-spacing:-0.034px;right:336.334px;">2,076,796,000</span>
<span class="t" id="t102" style="font-size:14px;line-height:22px;top:388.5px;color:#000;letter-spacing:0.071px;left:367.30px;">DHN00002-170723</span>
<span class="t" id="t103" style="font-size:14px;line-height:22px;top:388.5px;color:#000;letter-spacing:0.442px;left:600.30px;">17/07/2023</span>
<span class="t" id="t104" style="font-size:14px;line-height:22px;top:388.5px;color:#000;letter-spacing:0.068px;left:813.30px;">Đặt hàng nhà cung cấp</span>
<span class="t" id="t105" style="font-size:14px;line-height:22px;top:388.5px;color:#000;right:758.800px;">0</span>
<span class="t" id="t106" style="font-size:15px;line-height:23px;top:387.5px;color:#000;right:617.600px;">0</span>
<span class="t" id="t107" style="font-size:14px;line-height:22px;top:388.5px;color:#000;right:473.800px;">0</span>
<span class="t" id="t108" style="font-size:15px;line-height:23px;top:387.5px;color:#000;letter-spacing:-0.034px;right:336.334px;">2,076,796,000</span>
<span class="t" id="t109" style="font-size:14px;line-height:22px;top:414.5px;color:#000;letter-spacing:-0.035px;left:367.30px;">PMH00002-170723</span>
<span class="t" id="t110" style="font-size:14px;line-height:22px;top:414.5px;color:#000;letter-spacing:0.442px;left:600.30px;">17/07/2023</span>
<span class="t" id="t111" style="font-size:14px;line-height:22px;top:414.5px;color:#000;letter-spacing:-0.148px;left:813.30px;">Phiếu mua hàng</span>
<span class="t" id="t112" style="font-size:14px;line-height:22px;top:414.5px;color:#000;letter-spacing:0.156px;right:758.644px;">100,000</span>
<span class="t" id="t113" style="font-size:15px;line-height:23px;top:413.5px;color:#000;right:617.600px;">0</span>
<span class="t" id="t114" style="font-size:14px;line-height:22px;top:414.5px;color:#000;right:473.800px;">0</span>
<span class="t" id="t115" style="font-size:15px;line-height:23px;top:413.5px;color:#000;letter-spacing:-0.034px;right:336.334px;">2,076,896,000</span>
<span class="t" id="t116" style="font-size:14px;line-height:22px;top:440.5px;color:#000;letter-spacing:-0.035px;left:367.30px;">PMH00006-220823</span>
<span class="t" id="t117" style="font-size:14px;line-height:22px;top:440.5px;color:#000;letter-spacing:0.442px;left:600.30px;">22/08/2023</span>
<span class="t" id="t118" style="font-size:14px;line-height:22px;top:440.5px;color:#000;letter-spacing:-0.148px;left:813.30px;">Phiếu mua hàng</span>
<span class="t" id="t119" style="font-size:14px;line-height:22px;top:440.5px;color:#000;letter-spacing:0.242px;right:758.558px;">10,000,000</span>
<span class="t" id="t120" style="font-size:15px;line-height:23px;top:439.5px;color:#000;right:617.600px;">0</span>
<span class="t" id="t121" style="font-size:14px;line-height:22px;top:440.5px;color:#000;right:473.800px;">0</span>
<span class="t" id="t122" style="font-size:15px;line-height:23px;top:439.5px;color:#000;letter-spacing:-0.034px;right:336.334px;">2,086,896,000</span>
<span class="t" id="t123" style="font-size:14px;line-height:22px;top:466.5px;color:#000;letter-spacing:0.071px;left:367.30px;">DHN00004-121023</span>
<span class="t" id="t124" style="font-size:14px;line-height:22px;top:466.5px;color:#000;letter-spacing:0.442px;left:600.30px;">12/10/2023</span>
<span class="t" id="t125" style="font-size:14px;line-height:22px;top:466.5px;color:#000;letter-spacing:0.068px;left:813.30px;">Đặt hàng nhà cung cấp</span>
<span class="t" id="t126" style="font-size:14px;line-height:22px;top:466.5px;color:#000;right:758.800px;">0</span>
<span class="t" id="t127" style="font-size:15px;line-height:23px;top:465.5px;color:#000;right:617.600px;">0</span>
<span class="t" id="t128" style="font-size:14px;line-height:22px;top:466.5px;color:#000;right:473.800px;">0</span>
<span class="t" id="t129" style="font-size:15px;line-height:23px;top:465.5px;color:#000;letter-spacing:-0.034px;right:336.334px;">2,086,896,000</span>
<span class="t" id="t130" style="font-size:14px;line-height:22px;top:492.5px;color:#000;letter-spacing:0.040px;left:367.30px;">THN00002-131023</span>
<span class="t" id="t131" style="font-size:14px;line-height:22px;top:492.5px;color:#000;letter-spacing:0.442px;left:600.30px;">13/10/2023</span>
<span class="t" id="t132" style="font-size:14px;line-height:22px;top:492.5px;color:#000;letter-spacing:0.020px;left:813.30px;">Trả hàng nhà cung cấp</span>
<span class="t" id="t133" style="font-size:14px;line-height:22px;top:492.5px;color:#000;letter-spacing:0.229px;right:758.571px;">20,000</span>
<span class="t" id="t134" style="font-size:15px;line-height:23px;top:491.5px;color:#000;right:617.600px;">0</span>
<span class="t" id="t135" style="font-size:14px;line-height:22px;top:492.5px;color:#000;right:473.800px;">0</span>
<span class="t" id="t136" style="font-size:15px;line-height:23px;top:491.5px;color:#000;letter-spacing:-0.034px;right:336.334px;">2,086,876,000</span>
<span class="t" id="t137" style="font-size:14px;line-height:22px;top:518.5px;color:#000;letter-spacing:0.040px;left:367.30px;">THN00005-131023</span>
<span class="t" id="t138" style="font-size:14px;line-height:22px;top:518.5px;color:#000;letter-spacing:0.442px;left:600.30px;">13/10/2023</span>
<span class="t" id="t139" style="font-size:14px;line-height:22px;top:518.5px;color:#000;letter-spacing:0.020px;left:813.30px;">Trả hàng nhà cung cấp</span>
<span class="t" id="t140" style="font-size:14px;line-height:22px;top:518.5px;color:#000;letter-spacing:0.229px;right:758.571px;">40,000</span>
<span class="t" id="t141" style="font-size:15px;line-height:23px;top:517.5px;color:#000;right:617.600px;">0</span>
<span class="t" id="t142" style="font-size:14px;line-height:22px;top:518.5px;color:#000;right:473.800px;">0</span>
<span class="t" id="t143" style="font-size:15px;line-height:23px;top:517.5px;color:#000;letter-spacing:-0.034px;right:336.334px;">2,086,836,000</span>
<div style="left:333px;top:309px;width:30px;height:1px;background:#a6a6a6"></div>
<div style="left:364px;top:309px;width:1222px;height:1px;background:#ececec"></div>
<div style="left:333px;top:335px;width:30px;height:1px;background:#a6a6a6"></div>
<div style="left:364px;top:335px;width:1222px;height:1px;background:#d4d4d4"></div>
<div style="left:333px;top:361px;width:30px;height:1px;background:#a6a6a6"></div>
<div style="left:364px;top:361px;width:1222px;height:1px;background:#d4d4d4"></div>
<div style="left:333px;top:387px;width:30px;height:1px;background:#a6a6a6"></div>
<div style="left:364px;top:387px;width:1222px;height:1px;background:#d4d4d4"></div>
<div style="left:333px;top:413px;width:30px;height:1px;background:#a6a6a6"></div>
<div style="left:364px;top:413px;width:1222px;height:1px;background:#d4d4d4"></div>
<div style="left:333px;top:439px;width:30px;height:1px;background:#a6a6a6"></div>
<div style="left:364px;top:439px;width:1222px;height:1px;background:#d4d4d4"></div>
<div style="left:333px;top:465px;width:30px;height:1px;background:#a6a6a6"></div>
<div style="left:364px;top:465px;width:1222px;height:1px;background:#d4d4d4"></div>
<div style="left:333px;top:491px;width:30px;height:1px;background:#a6a6a6"></div>
<div style="left:364px;top:491px;width:1222px;height:1px;background:#d4d4d4"></div>
<div style="left:333px;top:517px;width:30px;height:1px;background:#a6a6a6"></div>
<div style="left:364px;top:517px;width:1222px;height:1px;background:#d4d4d4"></div>
<div style="left:333px;top:543px;width:30px;height:1px;background:#a6a6a6"></div>
<div style="left:364px;top:543px;width:1222px;height:1px;background:#d4d4d4"></div>
<div style="left:596px;top:284px;width:1px;height:260px;background:#d4d4d4"></div>
<div style="left:809px;top:284px;width:1px;height:260px;background:#d4d4d4"></div>
<div style="left:1018px;top:284px;width:1px;height:260px;background:#d4d4d4"></div>
<div style="left:1164px;top:284px;width:1px;height:260px;background:#d4d4d4"></div>
<div style="left:1305px;top:284px;width:1px;height:260px;background:#d4d4d4"></div>
<div style="left:1449px;top:284px;width:1px;height:260px;background:#d4d4d4"></div>
<div style="left:333px;top:543px;width:1253px;height:1px;background:#d4d4d4"></div>
<div class="h2" style="left:333px;top:857px;width:1254px;height:35px;border:1px solid #a6a6a6"></div>
<div style="left:1020px;top:860px;width:143px;height:30px;background:#fff;border:1px dashed #cdcdcd"></div>
<span class="t" id="t144" style="font-size:14px;line-height:22px;top:864.5px;color:#ff0000;font-weight:700;transform:scaleX(1.1444);transform-origin:right center;right:760.400px;">56,960,000</span>
<div style="left:1166px;top:860px;width:138px;height:30px;background:#fff;border:1px dashed #cdcdcd"></div>
<span class="t" id="t145" style="font-size:14px;line-height:22px;top:864.5px;color:#ff0000;font-weight:700;transform:scaleX(1.1280);transform-origin:right center;right:619.400px;">0</span>
<div style="left:1307px;top:860px;width:141px;height:30px;background:#fff;border:1px dashed #cdcdcd"></div>
<span class="t" id="t146" style="font-size:14px;line-height:22px;top:864.5px;color:#ff0000;font-weight:700;transform:scaleX(1.1495);transform-origin:right center;right:475.400px;">500,000,000</span>
<div style="left:328px;top:896px;width:1264px;height:1px;background:repeating-linear-gradient(90deg,#cdcdcd 0,#cdcdcd 3px,transparent 3px,transparent 6px)"></div>
<div style="left:328px;top:227px;width:1px;height:670px;background:repeating-linear-gradient(180deg,#d8d8d8 0,#d8d8d8 3px,transparent 3px,transparent 6px)"></div>
<div style="left:1591px;top:227px;width:1px;height:670px;background:repeating-linear-gradient(180deg,#d8d8d8 0,#d8d8d8 3px,transparent 3px,transparent 6px)"></div>
<svg style="left:858px;top:372px" width="20" height="24" viewBox="858 372 20 24"><path d="M862.6 375.4 L862.6 390.4 L866.4 387.2 L869.2 392.3 Q870.6 393.2 871.7 391.2 L869.3 386.5 L873.6 385.9 Z" fill="#fff" stroke="#1c1c28" stroke-width="1" stroke-linejoin="round"/></svg>
</div></body></html>
